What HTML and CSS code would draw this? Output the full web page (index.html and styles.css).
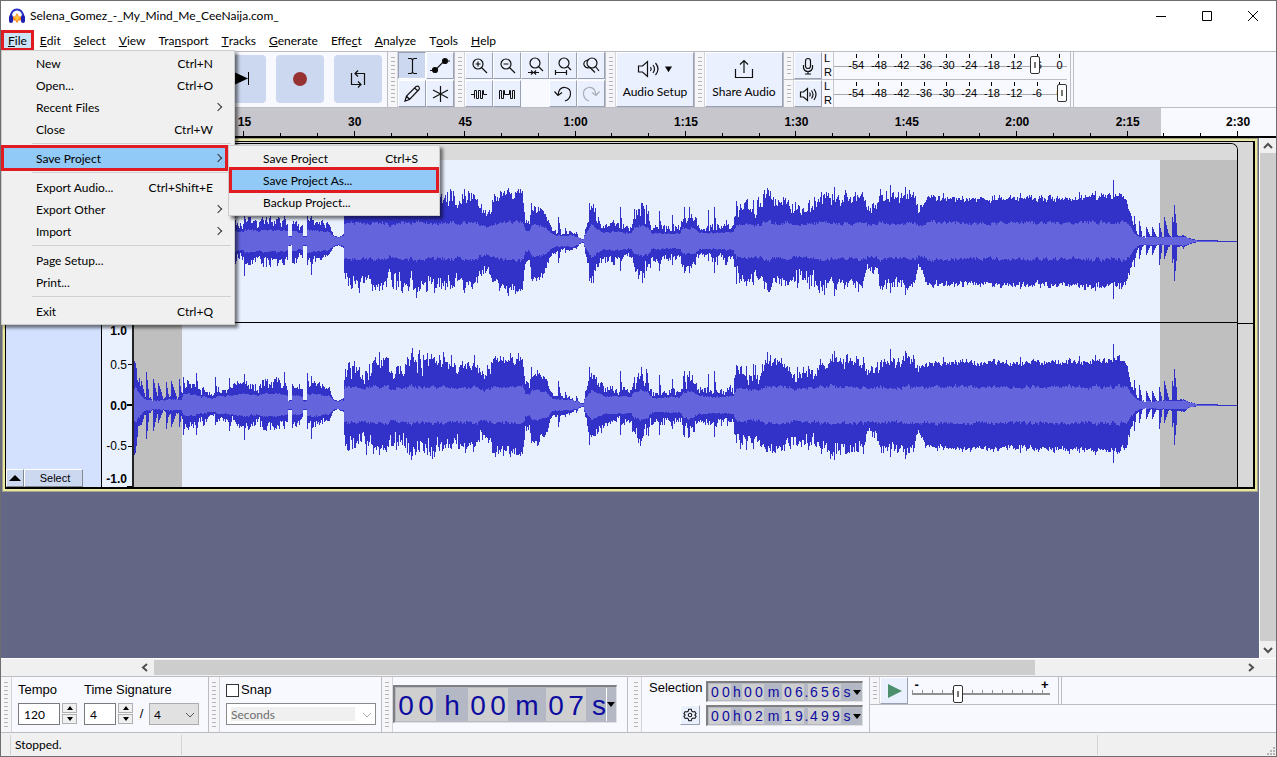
FILE: index.html
```html
<!DOCTYPE html>
<html lang="en">

<head>
    <meta charset="UTF-8">
    <meta name="viewport" content="width=device-width, initial-scale=1.0">
    <title>Selena_Gomez_-_My_Mind_Me_CeeNaija.com_</title>
    <link rel="stylesheet" href="styles.css">
</head>

<body>

    <header class="titlebar">
        <svg class="app-icon" width="18" height="16" viewBox="0 0 18 16">
            <path d="M3 9 C2 -1 16 -1 15 9" fill="none" stroke="#2a2fc4" stroke-width="2" />
            <path d="M4 10 L6 8 L7 9 L9 5 L11 9 L12 8 L14 10 L12 13 L11 12 L9 15 L7 12 L6 13 Z" fill="#ff7a18" />
            <path d="M6 10 L9 7 L12 10 L9 13 Z" fill="#ffc23a" />
            <rect x="1" y="7" width="4" height="8" rx="2" fill="#1c20b0" />
            <rect x="13" y="7" width="4" height="8" rx="2" fill="#1c20b0" />
        </svg>
        <h1 class="title">Selena_Gomez_-_My_Mind_Me_CeeNaija.com_</h1>
        <div class="window-controls">
            <button type="button" aria-label="Minimize"><svg width="12" height="12" viewBox="0 0 12 12"><path d="M1 6.500h10" /></svg></button>
            <button type="button" aria-label="Maximize"><svg width="12" height="12" viewBox="0 0 12 12"><path d="M1.500 1.500h9v9h-9z" /></svg></button>
            <button type="button" aria-label="Close"><svg width="12" height="12" viewBox="0 0 12 12"><path d="M1 1l10 10M11 1L1 11" /></svg></button>
        </div>
    </header>

    <nav class="menubar">
        <div class="menu-holder">
            <button type="button" class="open"><u>F</u>ile</button>
            <div class="menu file-menu">
                <button type="button"><span>New</span><kbd>Ctrl+N</kbd></button>
                <button type="button"><span>Open...</span><kbd>Ctrl+O</kbd></button>
                <button type="button" class="has-sub"><span>Recent Files</span></button>
                <button type="button"><span>Close</span><kbd>Ctrl+W</kbd></button>
                <hr>
                <div class="menu-holder">
                    <button type="button" class="has-sub active"><span>Save Project</span></button>
                    <div class="menu sub-menu">
                        <button type="button"><span>Save Project</span><kbd>Ctrl+S</kbd></button>
                        <button type="button" class="active"><span>Save Project As...</span></button>
                        <button type="button"><span>Backup Project...</span></button>
                    </div>
                </div>
                <hr>
                <button type="button"><span>Export Audio...</span><kbd>Ctrl+Shift+E</kbd></button>
                <button type="button" class="has-sub"><span>Export Other</span></button>
                <button type="button" class="has-sub"><span>Import</span></button>
                <hr>
                <button type="button"><span>Page Setup...</span></button>
                <button type="button"><span>Print...</span></button>
                <hr>
                <button type="button"><span>Exit</span><kbd>Ctrl+Q</kbd></button>
            </div>
        </div>
        <button type="button"><u>E</u>dit</button>
        <button type="button"><u>S</u>elect</button>
        <button type="button"><u>V</u>iew</button>
        <button type="button">Tra<u>n</u>sport</button>
        <button type="button"><u>T</u>racks</button>
        <button type="button"><u>G</u>enerate</button>
        <button type="button">Effe<u>c</u>t</button>
        <button type="button"><u>A</u>nalyze</button>
        <button type="button">T<u>o</u>ols</button>
        <button type="button"><u>H</u>elp</button>
    </nav>

    <div class="toolbars">
        <div class="bar transport">
            <div class="grip"></div>
            <button type="button" class="big" aria-label="Play"><svg width="24" height="24" viewBox="0 0 24 24"><path d="M5 4l15 8-15 8z" fill="#3c8c5c" /></svg></button>
            <button type="button" class="big" aria-label="Stop"><svg width="24" height="24" viewBox="0 0 24 24"><path d="M5 5h14v14H5z" /></svg></button>
            <button type="button" class="big" aria-label="Skip to start"><svg width="24" height="24" viewBox="0 0 24 24"><path d="M20 6v12L7 12zM4 6h1v12H4z" /></svg></button>
            <button type="button" class="big" aria-label="Skip to end"><svg width="24" height="24" viewBox="0 0 24 24"><path d="M4 5v13l14-6.500zM18 5h1v13h-1z" /></svg></button>
            <button type="button" class="big" aria-label="Record"><svg width="24" height="24" viewBox="0 0 24 24"><circle cx="12" cy="12" r="7" fill="#963232" /></svg></button>
            <button type="button" class="big" aria-label="Loop"><svg class="line" width="24" height="24" viewBox="0 0 24 24"><path d="M5.500 6v11.500H15M12 14.500l3 3-3 3M18.500 18V6.500H9M12 3.500l-3 3 3 3" /></svg></button>
        </div>

        <div class="bar">
            <div class="grip"></div>
            <div class="grid tools">
                <button type="button" class="tool pressed" aria-label="Selection tool"><svg class="line" width="20" height="20" viewBox="0 0 20 20"><path d="M6 2.500h3l1.500 1 1.500-1h3M10.500 3.500v13M6 17.500h3l1.500-1 1.500 1h3" /></svg></button>
                <button type="button" class="tool" aria-label="Envelope tool"><svg class="line" width="20" height="20" viewBox="0 0 20 20"><path d="M0 14.500h5L14 5h6" /><circle cx="5" cy="14" r="2.500" fill="#000" /><circle cx="15" cy="5" r="2.500" fill="#000" /></svg></button>
                <button type="button" class="tool" aria-label="Draw tool"><svg class="line" width="20" height="20" viewBox="0 0 20 20"><path d="M3 17l1.500-5L14 2.500q2-1 3 .5t0 2.500L7.500 15.500zM12.500 4l3.500 3M4.500 12l3 3.500" /></svg></button>
                <button type="button" class="tool" aria-label="Multi tool"><svg class="line" width="20" height="20" viewBox="0 0 20 20"><path d="M10.500 2v16M3 6l15 8M18 6L3 14" /></svg></button>
            </div>
        </div>

        <div class="bar">
            <div class="grip"></div>
            <div class="grid edit">
                <button type="button" class="tool" aria-label="Zoom in"><svg class="line" width="20" height="20" viewBox="0 0 20 20"><circle cx="9" cy="8" r="5" /><path d="M12.500 11.500L18 17M9 5.500v5M6.500 8h5" /></svg></button>
                <button type="button" class="tool" aria-label="Zoom out"><svg class="line" width="20" height="20" viewBox="0 0 20 20"><circle cx="9" cy="8" r="5" /><path d="M12.500 11.500L18 17M6.500 8h5" /></svg></button>
                <button type="button" class="tool" aria-label="Fit selection to width"><svg class="line" width="20" height="20" viewBox="0 0 20 20"><circle cx="10" cy="7" r="5" /><path d="M13.500 10.500L18 15M3 16.500h5M6 14.500l2 2-2 2M14 16.500H9M11 14.500l-2 2 2 2" /></svg></button>
                <button type="button" class="tool" aria-label="Fit project to width"><svg class="line" width="20" height="20" viewBox="0 0 20 20"><circle cx="11" cy="7" r="5" /><path d="M14.500 10.500L18 14M2.500 14v5M13.500 14v5M3 16.500h10" /></svg></button>
                <button type="button" class="tool" aria-label="Zoom toggle"><svg class="line" width="20" height="20" viewBox="0 0 20 20"><circle cx="11" cy="7" r="5" /><path d="M14.500 10.500L18 15M7 4Q2 5 3 9q2 4 6 2.500l5 5" /></svg></button>
                <button type="button" class="tool" aria-label="Trim audio"><svg class="line thin" width="20" height="20" viewBox="0 0 20 20"><path d="M2 10.500h3.500M5.500 14.500v-8h2v8h2v-8h2v8h2v-8h1v4H18" /></svg></button>
                <button type="button" class="tool" aria-label="Silence audio"><svg class="line thin" width="20" height="20" viewBox="0 0 20 20"><path d="M2.500 15V6.500h2v8h2v-8h1v4h5v-4h1v8h2v-8h2V15" /></svg></button>
                <span></span>
                <button type="button" class="tool" aria-label="Undo"><svg class="line" width="20" height="20" viewBox="0 0 20 20"><path d="M5 11Q6 3 12 3.500q6 1 5.500 6.500T12 17M1.500 7.500L5 11.500l4-3" /></svg></button>
                <button type="button" class="tool" aria-label="Redo" disabled><svg class="line" width="20" height="20" viewBox="0 0 20 20"><path d="M15 11Q14 3 8 3.500q-6 1-5.500 6.500T8 17M18.500 7.500L15 11.500l-4-3" /></svg></button>
            </div>
        </div>

        <div class="bar">
            <div class="grip"></div>
            <button type="button" class="wide">
                <svg class="line" width="36" height="22" viewBox="0 0 36 22"><path d="M1.500 8v6h4l5 4.500v-15L5.500 8zM13.500 9q1.500 2 0 4M16 7q3 4 0 8M18.500 5q5 6 0 12" /><path d="M29 9h5l-2.500 4z" fill="#000" /></svg>
                Audio Setup
            </button>
        </div>

        <div class="bar">
            <div class="grip"></div>
            <button type="button" class="wide">
                <svg class="line" width="22" height="22" viewBox="0 0 22 22"><path d="M2.500 11v8.500h17V11M11 15V3M7 6.500L11 2.500l4 4" /></svg>
                Share Audio
            </button>
        </div>

        <div class="meters">
            <div class="meter-row">
                <div class="grip"></div>
                <button type="button" class="tool" aria-label="Record meter"><svg class="line" width="20" height="20" viewBox="0 0 20 20"><rect x="7.500" y="2.500" width="5" height="10" rx="2.500" /><path d="M5.500 9v3q1 3.500 4.500 3.500t4.500-3.500V9M10 15.500V18M7 18h6" /></svg></button>
                <div class="channels"><span>L</span><span>R</span></div>
                <div class="meter">
                    <div class="scale"><span>-54</span><span>-48</span><span>-42</span><span>-36</span><span>-30</span><span>-24</span><span>-18</span><span>-12</span><span>-6</span><span>0</span></div>
                    <input type="range" min="0" max="100" value="88" aria-label="Recording volume">
                </div>
            </div>
            <div class="meter-row">
                <div class="grip"></div>
                <button type="button" class="tool" aria-label="Playback meter"><svg class="line" width="20" height="20" viewBox="0 0 20 20"><path d="M2.500 8v5h3l4 3.500v-12L5.500 8zM11.500 8.500q1.500 2 0 4M13.500 6.500q3 4 0 8M16 5q4 5.500 0 11" /></svg></button>
                <div class="channels"><span>L</span><span>R</span></div>
                <div class="meter">
                    <div class="scale"><span>-54</span><span>-48</span><span>-42</span><span>-36</span><span>-30</span><span>-24</span><span>-18</span><span>-12</span><span>-6</span><span>0</span></div>
                    <input type="range" min="0" max="100" value="100" aria-label="Playback volume">
                </div>
            </div>
        </div>
        <div class="bar-end"></div>
    </div>

    <div class="timeline">
        <div class="marks">
            <div class="mark"><span>15</span><i></i><i></i><i></i></div>
            <div class="mark"><span>30</span><i></i><i></i><i></i></div>
            <div class="mark"><span>45</span><i></i><i></i><i></i></div>
            <div class="mark"><span>1:00</span><i></i><i></i><i></i></div>
            <div class="mark"><span>1:15</span><i></i><i></i><i></i></div>
            <div class="mark"><span>1:30</span><i></i><i></i><i></i></div>
            <div class="mark"><span>1:45</span><i></i><i></i><i></i></div>
            <div class="mark"><span>2:00</span><i></i><i></i><i></i></div>
            <div class="mark"><span>2:15</span><i></i><i></i><i></i></div>
            <div class="mark"><span>2:30</span><i></i><i></i><i></i></div>
        </div>
    </div>

    <main class="workspace">
        <div class="canvas">
            <section class="track">
                <div class="track-inner">
                    <div class="panel">
                        <button type="button" class="collapse" aria-label="Collapse"><svg width="12" height="8" viewBox="0 0 12 8"><path d="M0 7l6-6 6 6z" /></svg></button>
                        <button type="button" class="select">Select</button>
                    </div>
                    <div class="vruler">
                        <div class="scale-v"><b>1.0</b><span>0.5</span><b>0.0</b><span>-0.5</span><b>-1.0</b></div>
                    </div>
                    <div class="clip">
                        <div class="clip-header"></div>
                        <svg class="lane" id="left" viewBox="0 0 1104 162" preserveAspectRatio="none"></svg>
                        <svg class="lane" id="right" viewBox="0 0 1104 164" preserveAspectRatio="none"></svg>
                    </div>
                    <div class="tail"></div>
                </div>
            </section>
        </div>
        <div class="vscroll">
            <svg width="16" height="15" viewBox="0 0 16 15"><path d="M4 10l4-4 4 4" /></svg>
            <div class="thumb"></div>
            <svg width="16" height="17" viewBox="0 0 16 17"><path d="M4 7l4 4 4-4" /></svg>
        </div>
    </main>

    <div class="hscroll">
        <svg width="17" height="17" viewBox="0 0 17 17"><path d="M10 5L6 8.500l4 3.500" /></svg>
        <div class="rail"><div class="thumb"></div></div>
        <svg width="17" height="17" viewBox="0 0 17 17"><path d="M7 5l4 3.500L7 12" /></svg>
    </div>

    <div class="toolbars bottom">
        <div class="bar">
            <div class="grip"></div>
            <div class="signature">
                <label for="tempo">Tempo</label>
                <label for="beats" class="upper">Time Signature</label>
                <div class="spin">
                    <input type="text" id="tempo" value="120">
                    <div class="steps">
                        <button type="button" aria-label="Tempo up"><svg width="8" height="4" viewBox="0 0 8 4"><path d="M1 4l3-4 3 4z" /></svg></button>
                        <button type="button" aria-label="Tempo down"><svg width="8" height="4" viewBox="0 0 8 4"><path d="M1 0l3 4 3-4z" /></svg></button>
                    </div>
                </div>
                <div class="spin beats">
                    <input type="text" id="beats" value="4">
                    <div class="steps">
                        <button type="button" aria-label="Beats up"><svg width="8" height="4" viewBox="0 0 8 4"><path d="M1 4l3-4 3 4z" /></svg></button>
                        <button type="button" aria-label="Beats down"><svg width="8" height="4" viewBox="0 0 8 4"><path d="M1 0l3 4 3-4z" /></svg></button>
                    </div>
                </div>
                <span class="slash">/</span>
                <div class="combo unit">
                    <select aria-label="Beat unit"><option>4</option></select>
                    <svg width="10" height="6" viewBox="0 0 10 6"><path d="M1 1l4 4 4-4" /></svg>
                </div>
            </div>
        </div>

        <div class="bar">
            <div class="grip"></div>
            <div class="snap">
                <label><input type="checkbox">Snap</label>
                <div class="combo seconds">
                    <select aria-label="Snap to" disabled><option>Seconds</option></select>
                    <svg width="10" height="6" viewBox="0 0 10 6"><path d="M1 1l4 4 4-4" /></svg>
                </div>
            </div>
        </div>

        <div class="bar">
            <div class="grip"></div>
            <div class="time big-time">
                <b>0</b><b>0</b><i>h</i><b>0</b><b>0</b><i>m</i><b>0</b><b>7</b><i class="sec">s</i>
                <button type="button" aria-label="Time format"><svg width="8" height="5" viewBox="0 0 8 5"><path d="M0 0h8L4 5z" /></svg></button>
            </div>
        </div>
        <div class="gap"></div>

        <div class="bar">
            <div class="grip"></div>
            <div class="selection">
                <span class="caption">Selection</span>
                <div class="time">
                    <b>0</b><b>0</b><i>h</i><b>0</b><b>0</b><i class="min">m</i><b>0</b><b>6</b><i class="dot">.</i><b>6</b><b>5</b><b>6</b><i>s</i>
                    <button type="button" aria-label="Start format"><svg width="8" height="5" viewBox="0 0 8 5"><path d="M0 0h8L4 5z" /></svg></button>
                </div>
                <button type="button" class="gear" aria-label="Selection settings"><svg class="line" width="14" height="14" viewBox="0 0 16 16"><path d="M6.500 1.500h3l.5 2 1.500 1 2-.5 1.500 2.500L13.500 8l1.500 1.500-1.500 2.500-2-.5-1.500 1-.5 2h-3l-.5-2-1.500-1-2 .5L1 9.500 2.500 8 1 6.500 2.500 4l2 .5 1.500-1z" /><circle cx="8" cy="8" r="2" /></svg></button>
                <div class="time">
                    <b>0</b><b>0</b><i>h</i><b>0</b><b>2</b><i class="min">m</i><b>1</b><b>9</b><i class="dot">.</i><b>4</b><b>9</b><b>9</b><i>s</i>
                    <button type="button" aria-label="End format"><svg width="8" height="5" viewBox="0 0 8 5"><path d="M0 0h8L4 5z" /></svg></button>
                </div>
            </div>
        </div>

        <div class="speed">
            <div class="grip"></div>
            <button type="button" class="tool" aria-label="Play at speed"><svg width="18" height="18" viewBox="0 0 18 18"><path d="M3 2l14 7-14 7z" fill="#4b8f6c" /></svg></button>
            <div class="slider">
                <div class="ends"><span>-</span><span>+</span></div>
                <input type="range" min="0" max="100" value="32" aria-label="Playback speed">
            </div>
            <div class="bar-end"></div>
        </div>
    </div>

    <footer class="statusbar">
        <span class="state">Stopped.</span>
        <span class="message"></span>
        <span class="rate"></span>
        <svg width="10" height="10" viewBox="0 0 10 10"><path d="M7 1h2v2H7zM4 4h2v2H4zM7 4h2v2H7zM1 7h2v2H1zM4 7h2v2H4zM7 7h2v2H7z" /></svg>
    </footer>

    <script src="script.js"></script>
</body>

</html>
```
FILE: styles.css
```css
* {
    box-sizing: border-box;
}

body {
    margin: 0;
    min-height: 100vh;
    display: flex;
    flex-direction: column;
    border: 1px solid #6e6e6e;
    background-color: #f0f0f0;
    color: #000;
    font-family: Lato, 'Open Sans', sans-serif;
    font-size: 12px;
}

button,
input,
select {
    margin: 0;
    padding: 0;
    border: none;
    border-radius: 0;
    background: none;
    color: inherit;
    font: inherit;
}

button {
    display: flex;
    align-items: center;
    justify-content: center;
}

svg {
    display: block;
    flex: none;
}

.line {
    fill: none;
    stroke: #111;
    stroke-width: 1.2;
}

.thin {
    stroke-width: 1;
}

/* Title bar */
.titlebar {
    display: flex;
    align-items: center;
    height: 29px;
    padding-left: 7px;
    background-color: #fff;
}

.title {
    flex: 1;
    margin: 0 0 0 4px;
    font-size: 12px;
    font-weight: normal;
}

.window-controls {
    display: flex;
    height: 100%;
}

.window-controls button {
    width: 46px;
}

.window-controls path {
    fill: none;
    stroke: #000;
}

/* Menus */
.menubar {
    display: flex;
    height: 21px;
    background-color: #fff;
}

.menubar > button,
.open {
    height: 21px;
    padding: 0 7px 0 6px;
}

.menu-holder {
    position: relative;
}

.menubar .open {
    border: 3px solid #e01b22;
    padding: 0 4px;
    background-color: #cce4f7;
}

.menu {
    position: absolute;
    z-index: 2;
    padding: 1px 1px 2px;
    border: 1px solid #ccc;
    background-color: #f0f0f0;
    box-shadow: 3px 3px 3px rgba(0, 0, 0, 0.5);
}

.file-menu {
    top: 20px;
    left: 0;
    width: 234px;
}

.sub-menu {
    top: -2px;
    left: 225px;
    width: 212px;
}

.menu button {
    width: 100%;
    height: 22px;
    padding: 0 20px 0 33px;
    justify-content: space-between;
}

.menu kbd {
    font: inherit;
}

.menu hr {
    height: 1px;
    margin: 3px 2px 3px 29px;
    border: none;
    background-color: #d0d0d0;
}

.menu .has-sub {
    padding-right: 12px;
}

.has-sub::after {
    content: "";
    width: 5px;
    height: 5px;
    border: solid #333;
    border-width: 1px 1px 0 0;
    transform: rotate(45deg);
}

.menu .active {
    background-color: #91c9f7;
    outline: 3px solid #e01b22;
    outline-offset: -1px;
}

.file-menu > .menu-holder > .active {
    width: 223px;
    padding-right: 5px;
}

.sub-menu .active {
    width: 206px;
    margin-left: 1px;
    padding-left: 32px;
}

/* Toolbars */
.toolbars {
    display: flex;
    height: 57px;
    border-top: 1px solid #bcbcc4;
    border-bottom: 1px solid #bcbcc4;
    background-color: #f8f9ff;
}

.bar {
    display: flex;
    border-right: 1px solid #bcbcc4;
}

.grip {
    flex: none;
    width: 10px;
    border-right: 1px solid #d4d4dc;
    background: repeating-linear-gradient(to bottom, transparent 0 3px, #b4b4b8 3px 4px) 3px 2px / 4px calc(100% - 4px) no-repeat, #f6f6f8;
}

.transport {
    width: 387px;
    padding-right: 4px;
    align-items: center;
    gap: 10px;
}

.transport .grip {
    align-self: stretch;
    margin-right: 23px;
}

.big {
    width: 48px;
    height: 48px;
    margin-bottom: 1px;
    border-radius: 4px;
    background-color: #ccd8f0;
}

.grid {
    display: grid;
    grid-auto-rows: 28px;
}

.tools {
    grid-template-columns: 28px 28px;
}

.edit {
    grid-template-columns: repeat(5, 28px);
}

.tool,
.wide,
.gear {
    border: 1px solid;
    border-color: #fff #9aa0b4 #9aa0b4 #fff;
    background-color: #ebf0ff;
}

.tool {
    width: 28px;
    height: 27px;
}

.pressed {
    border-color: #9aa0b4 #fff #fff #9aa0b4;
    background-color: #ccd8f0;
}

.tool:disabled svg {
    opacity: 0.3;
}

.wide {
    width: 78px;
    padding-bottom: 3px;
    flex-direction: column;
    gap: 4px;
}

.meters {
    display: flex;
    flex-direction: column;
}

.meter-row {
    display: flex;
    height: 28px;
    border-bottom: 1px solid #bcbcc4;
}

.channels {
    display: flex;
    flex-direction: column;
    justify-content: space-between;
    width: 11px;
    padding-left: 2px;
    font: 11px/13px "Liberation Sans", sans-serif;
}

.meter {
    position: relative;
    width: 234px;
    padding-left: 11px;
    border-left: 1px solid #c8c8c8;
    background: linear-gradient(#a8a8a8, #a8a8a8) 0 14px / 100% 1px no-repeat;
}

.scale {
    display: grid;
    grid-template-columns: repeat(10, 10%);
    width: 226px;
    font: 11px/14px "Liberation Sans", sans-serif;
    text-align: center;
}

.scale span::before {
    content: "";
    display: block;
    width: 1px;
    height: 4px;
    margin: 2px auto 0;
    background-color: #000;
}

input[type="range"] {
    -webkit-appearance: none;
    appearance: none;
}

input[type="range"]::-webkit-slider-thumb {
    -webkit-appearance: none;
    width: 10px;
    height: 18px;
    border: 1px solid #333;
    border-radius: 2px;
    background: linear-gradient(#777, #777) center / 2px 6px no-repeat, #fff;
}

.meter input {
    position: absolute;
    top: 4px;
    left: 0;
    width: 100%;
    height: 18px;
}

.bar-end {
    width: 4px;
    margin-left: 3px;
    border: solid #bcbcc4;
    border-width: 0 1px;
}

/* Timeline */
.timeline {
    display: flex;
    height: 30px;
    padding: 0 38px 0 133px;
    border-bottom: 2px solid #000;
    background-color: #f8f9ff;
}

.marks {
    flex: 1;
    display: flex;
    background: linear-gradient(to right, transparent 4%, #c6c6cc 4% 93%, transparent 93%);
}

.mark {
    flex: 1;
    display: grid;
    grid-template-columns: 1fr 1fr 1fr;
    grid-template-rows: 23px 5px;
    align-items: end;
}

.mark span {
    grid-column: 1 / -1;
    justify-self: end;
    width: 40px;
    margin-right: -20px;
    font: bold 12px/18px "Liberation Sans", sans-serif;
    text-align: center;
}

.mark i {
    height: 3px;
    border-right: 1px solid #000;
}

.mark i:last-child {
    height: 5px;
}

/* Tracks */
.workspace {
    flex: 1;
    display: flex;
}

.canvas {
    flex: 1;
    padding: 0 1px;
    background-color: #636684;
}

.track {
    padding: 2px;
    border: 1px solid #a4a48c;
    background-color: #e8e8a0;
}

.track-inner {
    display: flex;
    border: solid #000;
    border-width: 1px 2px 2px 1px;
    background-color: #d8d8d8;
}

.panel {
    display: flex;
    align-items: flex-end;
    width: 96px;
    border-right: 1px solid #000;
    background-color: #d3e1ff;
}

.collapse,
.select {
    height: 18px;
    border: 1px solid;
    border-color: #fff #808890 #808890 #fff;
    background-color: #ccd8f0;
    font: 11px "Liberation Sans", sans-serif;
}

.collapse {
    width: 18px;
}

.select {
    width: 59px;
    padding-left: 3px;
}

.vruler {
    display: flex;
    flex-direction: column;
    justify-content: flex-end;
    width: 32px;
    border-right: 2px solid #222;
    background-color: #e9f1ff;
}

.scale-v {
    display: grid;
    grid-template-rows: 21px 41px 41px 40px 21px;
    align-items: center;
    padding-right: 5px;
    background:
        linear-gradient(#000, #000) right 41px / 4px 1px no-repeat,
        linear-gradient(#000, #000) right 81px / 5px 2px no-repeat,
        linear-gradient(#000, #000) right 123px / 4px 1px no-repeat,
        linear-gradient(#000, #000) right bottom / 5px 1px no-repeat;
    background-origin: border-box;
    font: 12px/16px "Liberation Sans", sans-serif;
    text-align: right;
}

.scale-v b:first-child {
    align-self: start;
}

.scale-v b:last-child {
    align-self: end;
}

.clip {
    flex: 1;
    min-width: 0;
    margin-top: 1px;
    border: solid #000;
    border-width: 1px 1px 0 0;
    border-radius: 0 7px 0 0;
    overflow: hidden;
}

.clip-header {
    height: 16px;
    background-color: #dadada;
}

.lane {
    width: 100%;
    background: linear-gradient(to right, #bfbfbf 4.35%, #e9f1ff 4.35% 93%, #bfbfbf 93%);
    shape-rendering: crispEdges;
}

#left {
    height: 163px;
    border-bottom: 1px solid #000;
}

#right {
    height: 164px;
}

.peak {
    fill: #3232c8;
}

.rms {
    fill: #6464dc;
}

.tail {
    width: 15px;
}

.tail::before {
    content: "";
    display: block;
    height: 181px;
    border-bottom: 1px solid #000;
}

/* Scroll bars */
.vscroll {
    display: flex;
    flex-direction: column;
    width: 17px;
    border-left: 1px solid #fff;
}

.vscroll .thumb {
    flex: 1;
    background-color: #cdcdcd;
}

.vscroll path,
.hscroll path {
    fill: none;
    stroke: #505050;
    stroke-width: 2;
}

.hscroll {
    display: flex;
    align-items: center;
    height: 18px;
    padding: 0 17px 0 136px;
    border-top: 1px solid #fff;
}

.rail {
    flex: 1;
    height: 15px;
}

.rail .thumb {
    width: 81%;
    height: 100%;
    background-color: #cdcdcd;
}

/* Bottom toolbars */
.bottom {
    height: 57px;
    font: 13px/16px "Liberation Sans", sans-serif;
}

.bottom .bar .grip {
    width: 11px;
}

.signature {
    display: grid;
    grid-template-columns: 66px 50px 15px 50px;
    grid-template-rows: 20px 22px;
    row-gap: 3px;
    align-items: center;
    align-content: start;
    padding: 3px 9px 0 6px;
}

.upper {
    grid-column: 2 / -1;
}

.spin {
    display: flex;
    gap: 2px;
}

.spin input {
    width: 42px;
    height: 22px;
    padding-left: 5px;
    border: 1px solid #7a7a7a;
    background-color: #fff;
    font: 12px Lato, sans-serif;
}

.beats input {
    width: 32px;
}

.steps {
    display: flex;
    flex-direction: column;
    gap: 1px;
}

.steps button {
    width: 15px;
    height: 10px;
    border: 1px solid #b0b0b0;
    background-color: #f0f0f0;
}

.slash {
    text-align: center;
}

.combo {
    position: relative;
}

.combo select {
    -webkit-appearance: none;
    appearance: none;
    display: block;
    width: 100%;
    height: 22px;
    padding-left: 4px;
    border: 1px solid #acacac;
    background-color: #e1e1e1;
    font: 12px Lato, sans-serif;
}

.combo svg {
    position: absolute;
    top: 9px;
    right: 4px;
    pointer-events: none;
}

.combo path {
    fill: none;
    stroke: #555;
}

.snap {
    display: flex;
    flex-direction: column;
    gap: 3px;
    width: 161px;
    padding: 3px 5px 0 6px;
}

.snap label {
    display: flex;
    align-items: center;
    gap: 2px;
    height: 20px;
}

.snap input {
    -webkit-appearance: none;
    appearance: none;
    width: 13px;
    height: 13px;
    border: 1px solid #333;
    background-color: #fff;
}

.seconds select {
    border-color: #8a8a8a;
    background: linear-gradient(#f0f0f0, #f0f0f0) 4px 3px / 124px 14px no-repeat, #fff;
    color: #6d6d6d;
    opacity: 1;
}

.seconds path {
    stroke: #b0b0b0;
}

.time {
    display: flex;
    height: 21px;
    padding: 1px;
    border: solid;
    border-width: 2px 1px 1px 2px;
    border-color: #808080 #e0e0e0 #e0e0e0 #808080;
    background-color: #b4b8c4;
    color: #0c0ca0;
    font: 14px/17px "Liberation Sans", sans-serif;
    text-align: center;
}

.time b {
    width: 11px;
    background-color: #cfcfcf;
    font-weight: normal;
}

.time i {
    width: 11px;
    font-style: normal;
}

.time .min {
    width: 18px;
}

.time .dot {
    width: 4px;
}

.time button {
    width: 9px;
}

.big-time {
    width: 224px;
    height: 38px;
    margin: 8px 10px 0 0;
    font-size: 28px;
    line-height: 36px;
}

.big-time b {
    width: 20px;
}

.big-time i {
    width: 32px;
}

.big-time i:nth-child(6) {
    width: 38px;
}

.big-time .sec {
    flex: 1;
    text-align: right;
}

.big-time button {
    border-left: 1px solid #fff;
}

.gap {
    width: 3px;
}

.selection {
    display: grid;
    grid-template-columns: auto auto;
    align-content: start;
    gap: 3px 4px;
    padding: 4px 6px 0 7px;
}

.caption {
    line-height: 14px;
}

.gear {
    width: 20px;
    height: 20px;
    margin-right: 2px;
    justify-self: end;
}

.speed {
    flex: 1;
    display: flex;
    height: 28px;
    border-bottom: 1px solid #bcbcc4;
}

.slider {
    width: 147px;
    padding: 0 5px 0 4px;
}

.ends {
    display: flex;
    justify-content: space-between;
    padding: 0 2px;
    height: 8px;
    line-height: 15px;
    font-weight: bold;
}

.slider input {
    display: block;
    width: 100%;
    height: 18px;
    background:
        linear-gradient(#909090, #909090) 0 8px / 100% 2px no-repeat,
        repeating-linear-gradient(to right, #909090 0 1px, transparent 1px 10px) 0 5px / 100% 3px no-repeat;
}

/* Status bar */
.statusbar {
    display: flex;
    align-items: center;
    height: 23px;
    padding-left: 9px;
}

.statusbar span {
    height: 20px;
    border-left: 1px solid #d4d4d4;
    line-height: 20px;
}

.state {
    width: 171px;
    padding-left: 4px;
}

.message {
    flex: 1;
}

.rate {
    width: 169px;
}

.statusbar svg {
    align-self: flex-end;
    fill: #b4b4b4;
}
```
FILE: script.js
```js
// Loudness outline of the recording: position, upper peak, lower peak, roughness
const outline = [
    [0, 48, 54, 0.1], [4, 28, 30, 0.3], [10, 12, 14, 0.4], [18, 6, 6, 0.3], [30, 7, 7, 0.5], [47, 9, 9, 0.5],
    [49, 22, 22, 0.35], [60, 19, 19, 0.4], [70, 14, 16, 0.4], [78, 12, 14, 0.4], [84, 18, 17, 0.4], [110, 20, 20, 0.4],
    [150, 21, 21, 0.4], [153, 18, 18, 0.2], [154, 5, 5, 0.2], [157, 5, 5, 0.2], [158, 18, 20, 0.3], [168, 16, 16, 0.3],
    [169, 5, 5, 0.2], [172, 5, 5, 0.2], [173, 22, 20, 0.3], [194, 17, 15, 0.3], [199, 6, 6, 0.1], [204, 4, 4, 0.1],
    [209, 7, 7, 0.1], [210, 38, 44, 0.4], [236, 38, 42, 0.4], [240, 45, 44, 0.15], [252, 42, 44, 0.2], [256, 30, 36, 0.4],
    [270, 44, 45, 0.35], [300, 45, 44, 0.3], [342, 42, 43, 0.25], [346, 30, 30, 0.3], [356, 33, 33, 0.3], [358, 47, 46, 0.18],
    [388, 46, 48, 0.18], [391, 22, 24, 0.2], [395, 18, 20, 0.2], [397, 32, 38, 0.2], [408, 30, 36, 0.2], [416, 16, 16, 0.2],
    [422, 9, 12, 0.3], [436, 8, 8, 0.4], [448, 2, 2, 0.3], [449, 2, 2, 0.2], [451, 12, 12, 0.4], [457, 30, 34, 0.3],
    [463, 24, 26, 0.4], [470, 15, 18, 0.4], [486, 17, 17, 0.4], [497, 13, 15, 0.3], [500, 28, 32, 0.5], [513, 30, 32, 0.5],
    [518, 13, 19, 0.4], [545, 13, 16, 0.4], [549, 28, 30, 0.4], [558, 27, 26, 0.35], [566, 16, 15, 0.4], [580, 15, 20, 0.4],
    [600, 17, 20, 0.4], [603, 34, 36, 0.4], [628, 32, 36, 0.4], [632, 46, 45, 0.2], [648, 42, 42, 0.2], [660, 34, 40, 0.35],
    [680, 38, 42, 0.35], [700, 45, 45, 0.25], [730, 45, 44, 0.2], [734, 34, 26, 0.25], [744, 36, 32, 0.3], [748, 46, 46, 0.2],
    [780, 47, 46, 0.18], [785, 34, 24, 0.2], [792, 42, 42, 0.1], [850, 43, 44, 0.1], [930, 43, 44, 0.1], [960, 44, 46, 0.1],
    [984, 46, 45, 0.12], [993, 42, 42, 0.12], [996, 30, 30, 0.2], [1001, 13, 14, 0.3], [1006, 5, 5, 0.3], [1020, 4, 4, 0.3],
    [1034, 5, 5, 0.3], [1046, 5, 6, 0.2], [1050, 6, 7, 0.2], [1056, 3, 3, 0.2], [1064, 1, 1, 0], [1083, 1, 1, 0],
    [1085, 0.5, 0.5, 0], [1104, 0.5, 0.5, 0]
];

// Single hits that stand out: position, upper peak, lower peak, fade length
const hits = [
    [7, 24, 20, 5], [12, 33, 34, 3], [19, 26, 26, 5], [24, 22, 18, 6], [32, 23, 24, 3], [37, 24, 22, 7], [45, 26, 22, 3],
    [49, 28, 30, 4], [53, 25, 22, 5], [62, 32, 30, 3], [81, 28, 20, 2], [95, 27, 26, 2], [110, 31, 35, 2], [132, 24, 26, 2],
    [150, 33, 24, 2], [173, 32, 24, 2], [177, 29, 34, 2], [220, 44, 40, 2], [245, 53, 50, 1], [293, 52, 50, 1],
    [300, 48, 52, 1], [317, 50, 44, 1], [384, 52, 50, 1], [397, 38, 38, 2], [424, 24, 22, 3], [431, 13, 12, 3],
    [442, 9, 8, 3], [455, 38, 40, 3], [459, 28, 26, 3], [486, 34, 30, 2], [504, 32, 38, 2], [507, 38, 30, 2],
    [512, 36, 30, 3], [525, 30, 30, 2], [538, 26, 24, 2], [550, 34, 32, 2], [556, 34, 32, 2], [575, 31, 20, 1],
    [581, 34, 32, 2], [603, 40, 38, 2], [620, 41, 44, 2], [634, 53, 47, 1], [637, 50, 46, 1], [701, 54, 55, 1],
    [757, 56, 52, 1], [772, 54, 54, 2], [810, 48, 45, 1], [887, 48, 48, 1], [946, 49, 44, 1], [962, 50, 50, 1],
    [980, 61, 58, 1], [986, 48, 48, 1], [1001, 25, 26, 2], [1006, 20, 18, 3], [1013, 14, 14, 5], [1019, 14, 14, 5],
    [1026, 18, 24, 3], [1031, 24, 18, 5], [1041, 36, 40, 3], [1039, 24, 22, 4]
];

const width = 1104;

const createRandom = (seed) => () => {
    seed = (seed * 16807) % 2147483647;
    return seed / 2147483647;
};

const levelAt = (x) => {
    let i = 1;
    while (i < outline.length - 1 && outline[i][0] < x) {
        i++;
    }
    const a = outline[i - 1];
    const b = outline[i];
    const t = (x - a[0]) / (b[0] - a[0]);
    return a.map((value, k) => value + (b[k] - value) * t);
};

// Closed stepped shape around the middle line, one step for each pixel
const toPath = (up, down, middle) => {
    let d = `M0 ${middle}`;
    up.forEach((value, x) => {
        d += `V${(middle - value).toFixed(1)}H${x + 1}`;
    });
    for (let x = width - 1; x >= 0; x--) {
        d += `V${(middle + down[x]).toFixed(1)}H${x}`;
    }
    return d + 'Z';
};

const drawChannel = (id, middle, seed) => {
    const random = createRandom(seed);
    const peaks = { up: [], down: [] };
    const rms = { up: [], down: [] };
    let drift = 0.5;

    for (let x = 0; x < width; x++) {
        const [, up, down, rough] = levelAt(x);
        drift = drift * 0.6 + random() * 0.4;
        const wave = 1 + (drift - 0.5) * rough * 2;
        const body = Math.min(up * 0.42 + 2, 18) * (0.8 + drift * 0.4);
        peaks.up.push(up * (wave + (random() - 0.6) * rough));
        peaks.down.push(down * (wave + (random() - 0.6) * rough));
        rms.up.push(body * (0.95 + random() * 0.1));
        rms.down.push(body * (0.95 + random() * 0.1));
    }

    hits.forEach(([start, up, down, fade]) => {
        for (let i = 0; i < fade; i++) {
            const x = start + i;
            const left = 1 - i / (fade + 1);
            peaks.up[x] = Math.max(peaks.up[x], up * left);
            peaks.down[x] = Math.max(peaks.down[x], down * left);
        }
    });

    // The body never reaches past the peaks
    rms.up = rms.up.map((value, x) => Math.min(value, peaks.up[x] - 0.5));
    rms.down = rms.down.map((value, x) => Math.min(value, peaks.down[x] - 0.5));

    document.getElementById(id).innerHTML =
        `<path class="peak" d="${toPath(peaks.up, peaks.down, middle)}"/>` +
        `<path class="rms" d="${toPath(rms.up, rms.down, middle)}"/>`;
};

drawChannel('left', 81, 4242);
drawChannel('right', 82, 9177);
```
